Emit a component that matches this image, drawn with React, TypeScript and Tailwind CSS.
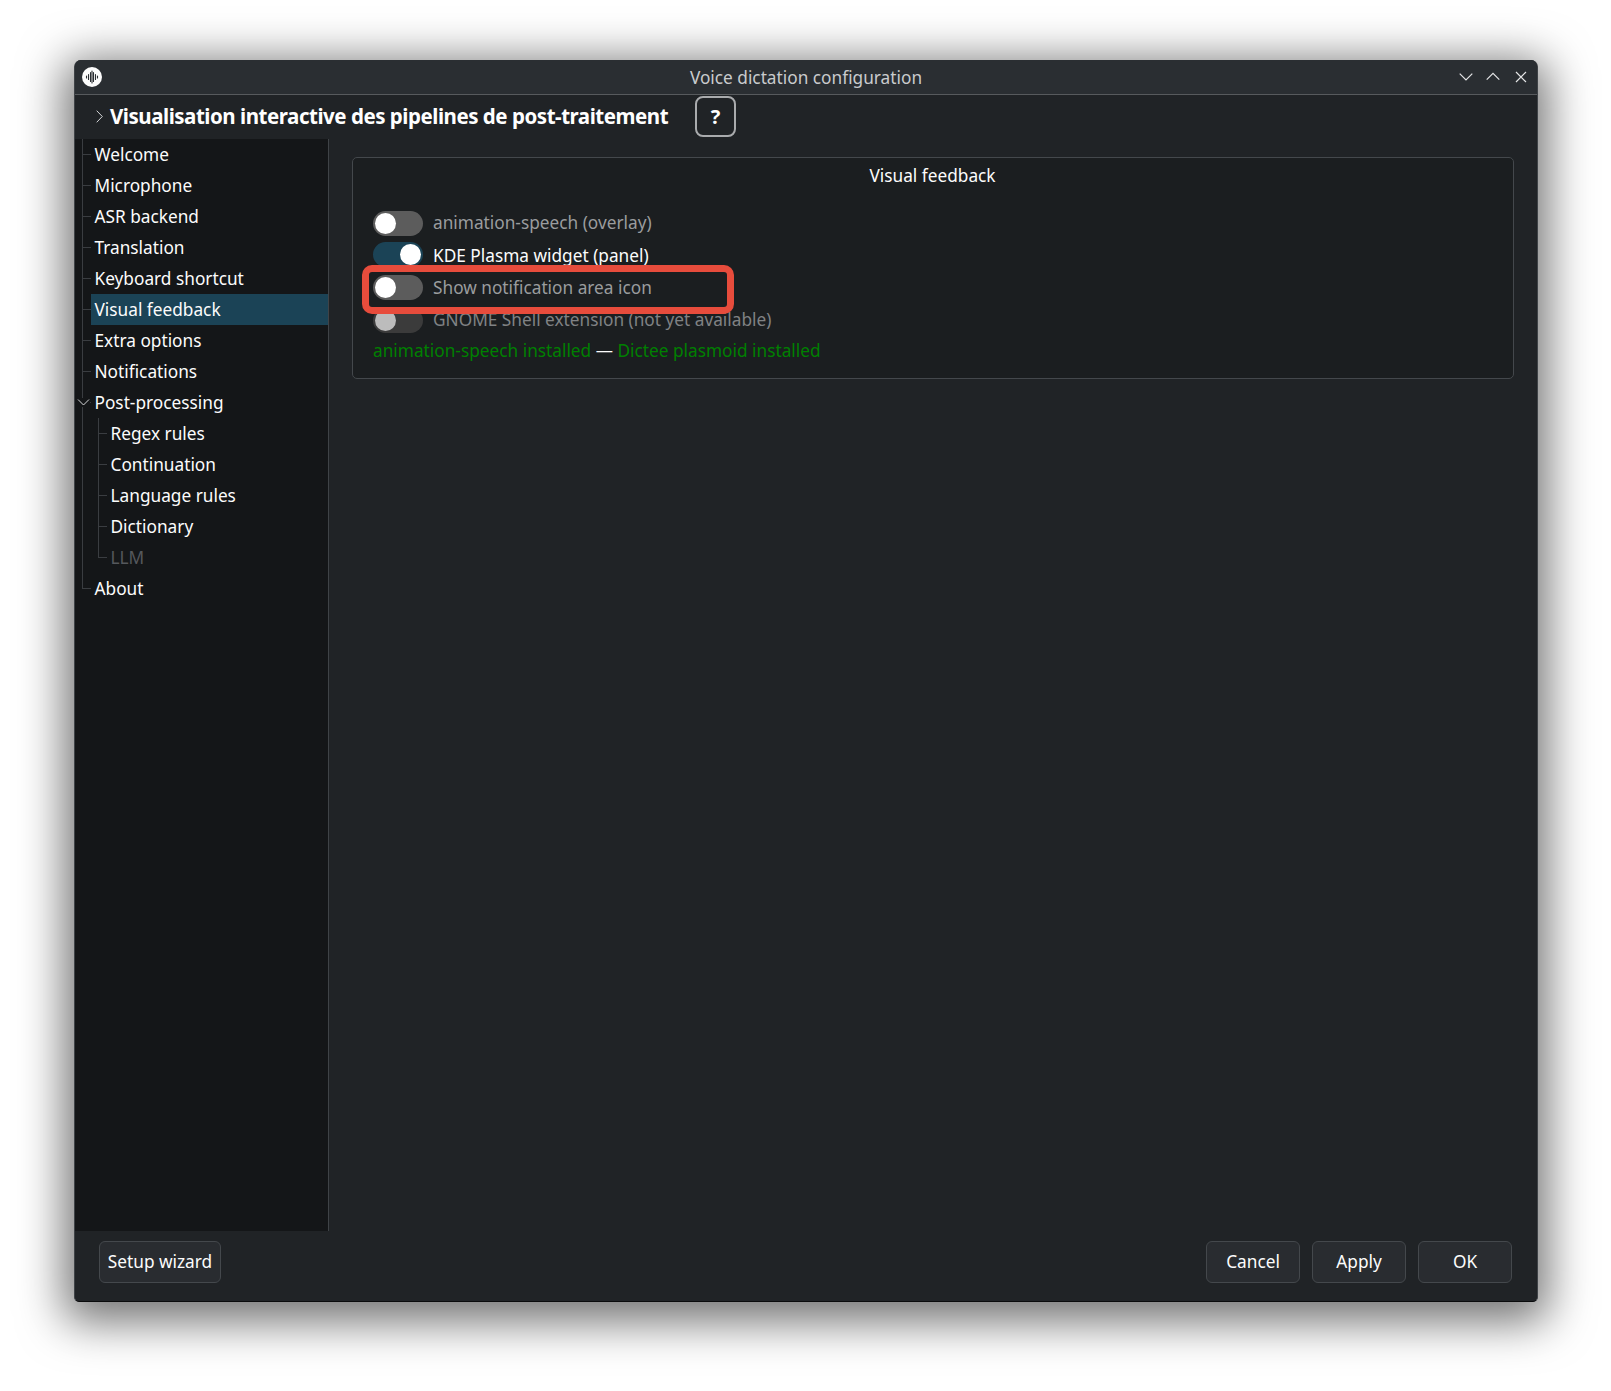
import React from "react";

type Item = { label: string; level?: 1 | 2; last?: boolean; selected?: boolean; disabled?: boolean; chevron?: boolean };

const items: Item[] = [
  { label: "Welcome" },
  { label: "Microphone" },
  { label: "ASR backend" },
  { label: "Translation" },
  { label: "Keyboard shortcut" },
  { label: "Visual feedback", selected: true },
  { label: "Extra options" },
  { label: "Notifications" },
  { label: "Post-processing", chevron: true },
  { label: "Regex rules", level: 2 },
  { label: "Continuation", level: 2 },
  { label: "Language rules", level: 2 },
  { label: "Dictionary", level: 2 },
  { label: "LLM", level: 2, last: true, disabled: true },
  { label: "About", last: true },
];

function Guide({ last }: { last?: boolean }) {
  return (
    <div className="w-[9px] h-full shrink-0 flex flex-col">
      <div className="h-1/2 border-l border-b border-[#3a3d41]" />
      <div className={last ? "h-1/2" : "h-1/2 border-l border-[#3a3d41]"} />
    </div>
  );
}

function TreeRow({ item }: { item: Item }) {
  return (
    <div className="relative flex h-[31px] pl-[7px]">
      {item.level === 2 && <div className="w-[16px] h-full shrink-0 border-l border-[#3a3d41]" />}
      <Guide last={item.last} />
      <div
        className={
          "flex-1 flex items-center pl-[3.5px] pt-[1px] " +
          (item.selected ? "bg-[#1b4356] " : "") +
          (item.disabled ? "text-[#55585c]" : "text-[#fcfcfc]")
        }
      >
        {item.label}
      </div>
      {item.chevron && (
        <svg className="absolute left-[2px] top-[11px] bg-[#141618]" width="13" height="9" viewBox="0 0 13 9" fill="none" stroke="#d4d6d8" strokeWidth="1">
          <path d="M1 1.5 L6.5 7 L12 1.5" />
        </svg>
      )}
    </div>
  );
}

function Toggle({ on, disabled, lift }: { on?: boolean; disabled?: boolean; lift?: boolean }) {
  return (
    <div
      className={
        "w-[50px] h-[25px] rounded-full p-[2px] flex items-center shrink-0 " +
        (on ? "justify-end bg-[#1b4356] " : "justify-start ") +
        (disabled ? "bg-[#3b3b3b] " : on ? "" : "bg-[#5c5c5c] ") +
        (lift ? "mb-[2px]" : "")
      }
    >
      <div className={"w-[21px] h-[21px] rounded-full " + (disabled ? "bg-[#bcbcbc]" : "bg-white")} />
    </div>
  );
}

function ToggleRow({ label, on, disabled, tall, lift }: { label: string; on?: boolean; disabled?: boolean; tall?: boolean; lift?: boolean }) {
  return (
    <div className={"flex items-center gap-[10px] " + (tall ? "h-[33px]" : "h-[32px]")}>
      <Toggle on={on} disabled={disabled} lift={lift} />
      <span className={on ? "text-[#fcfcfc]" : disabled ? "text-[#808284]" : "text-[#9a9c9e]"}>{label}</span>
    </div>
  );
}

function Btn({ children, w }: { children: React.ReactNode; w: string }) {
  return (
    <button className={"h-[42px] rounded-[6px] border border-[#44484c] bg-[#292c30] text-[#fcfcfc] " + w}>{children}</button>
  );
}

export default function App() {
  return (
    <div className="w-[1611px] h-[1391px] bg-white pt-[60px] pl-[74px] overflow-hidden font-['Noto_Sans',sans-serif] text-[17.25px] leading-none">
      <div className="w-[1464px] h-[1242px] rounded-t-[7px] rounded-b-[5px] bg-[#202326] flex flex-col overflow-hidden border-x border-[#3f4347] border-b-[#0a0b0c] border-b shadow-[0_10px_45px_10px_rgba(0,0,0,0.55)]">
        <div className="h-[35px] shrink-0 bg-[#2a2e32] border-b border-[#575a5d] grid grid-cols-[1fr_auto_1fr] items-center">
          <div className="pl-[7px] flex items-center">
            <svg width="20" height="20" viewBox="0 0 20 20">
              <circle cx="10" cy="10" r="10" fill="#fcfcfc" />
              <g stroke="#2a2e32" strokeWidth="1.1" strokeLinecap="round">
                <path d="M4.5 9V11M6.5 7.5V12.5M8.5 5.5V14.5M10 4V16M11.5 5.5V14.5M13.5 7.5V12.5M15.5 9V11" />
              </g>
            </svg>
          </div>
          <div className="text-[#c9cbcd] pt-[1px]">Voice dictation configuration</div>
          <div className="flex items-center justify-end pr-[10px]">
            <svg width="14" height="14" viewBox="0 0 14 14" fill="none" stroke="#e4e5e6" strokeWidth="1.2"><path d="M0.7 3.7 L7 10 L13.3 3.7" /></svg>
            <svg className="ml-[13px]" width="14" height="14" viewBox="0 0 14 14" fill="none" stroke="#e4e5e6" strokeWidth="1.2"><path d="M0.7 9.7 L7 3.4 L13.3 9.7" /></svg>
            <svg className="ml-[15px]" width="12" height="12" viewBox="0 0 12 12" fill="none" stroke="#e4e5e6" strokeWidth="1.2"><path d="M1 1 L11 11 M11 1 L1 11" /></svg>
          </div>
        </div>

        <div className="h-[44px] shrink-0 flex items-center pl-[21px] pb-[1px]">
          <svg width="7" height="13" viewBox="0 0 7 13" fill="none" stroke="#d4d6d8" strokeWidth="1"><path d="M0.7 0.7 L6.3 6.5 L0.7 12.3" /></svg>
          <span className="ml-[7px] w-[585px] whitespace-nowrap font-bold text-[20.5px] tracking-[-0.47px] text-white">Visualisation interactive des pipelines de post-traitement</span>
          <div className="w-[41px] h-[41px] rounded-[8px] border-2 border-[#a9abad] flex items-center justify-center font-bold text-[20px] text-white">?</div>
        </div>

        <div className="flex-1 flex min-h-0">
          <div className="w-[254px] shrink-0 bg-[#141618] border-r border-[#3f4347]">
            {items.map((it) => (
              <TreeRow key={it.label} item={it} />
            ))}
          </div>
          <div className="flex-1 pt-[18px] pl-[23px] pr-[23px]">
            <div className="relative h-[222px] rounded-[5px] border border-[#44484c] bg-[#1b1e20] flex flex-col">
              <div className="h-[49px] pt-[9px] pr-[1px] text-center text-[#fcfcfc] leading-[18px]">Visual feedback</div>
              <div className="pl-[20px] flex flex-col">
                <ToggleRow label="animation-speech (overlay)" />
                <ToggleRow label="KDE Plasma widget (panel)" on tall lift />
                <ToggleRow label="Show notification area icon" lift />
                <ToggleRow label="GNOME Shell extension (not yet available)" disabled />
                <div className="h-[30px] flex items-center gap-[4.5px]">
                  <span className="text-[#008000]">animation-speech installed</span>
                  <span className="text-[#fcfcfc]">—</span>
                  <span className="text-[#008000]">Dictee plasmoid installed</span>
                </div>
              </div>
              <div className="absolute left-[9px] top-[107px] w-[372px] h-[49px] rounded-[10px] border-[7px] border-[#e74c3c]" />
            </div>
          </div>
        </div>

        <div className="h-[70px] shrink-0 flex items-start justify-between pt-[10px] pl-[24px] pr-[25px]">
          <Btn w="w-[122px]">Setup wizard</Btn>
          <div className="flex gap-[12px]">
            <Btn w="w-[94px]">Cancel</Btn>
            <Btn w="w-[94px]">Apply</Btn>
            <Btn w="w-[94px]">OK</Btn>
          </div>
        </div>
      </div>
    </div>
  );
}
